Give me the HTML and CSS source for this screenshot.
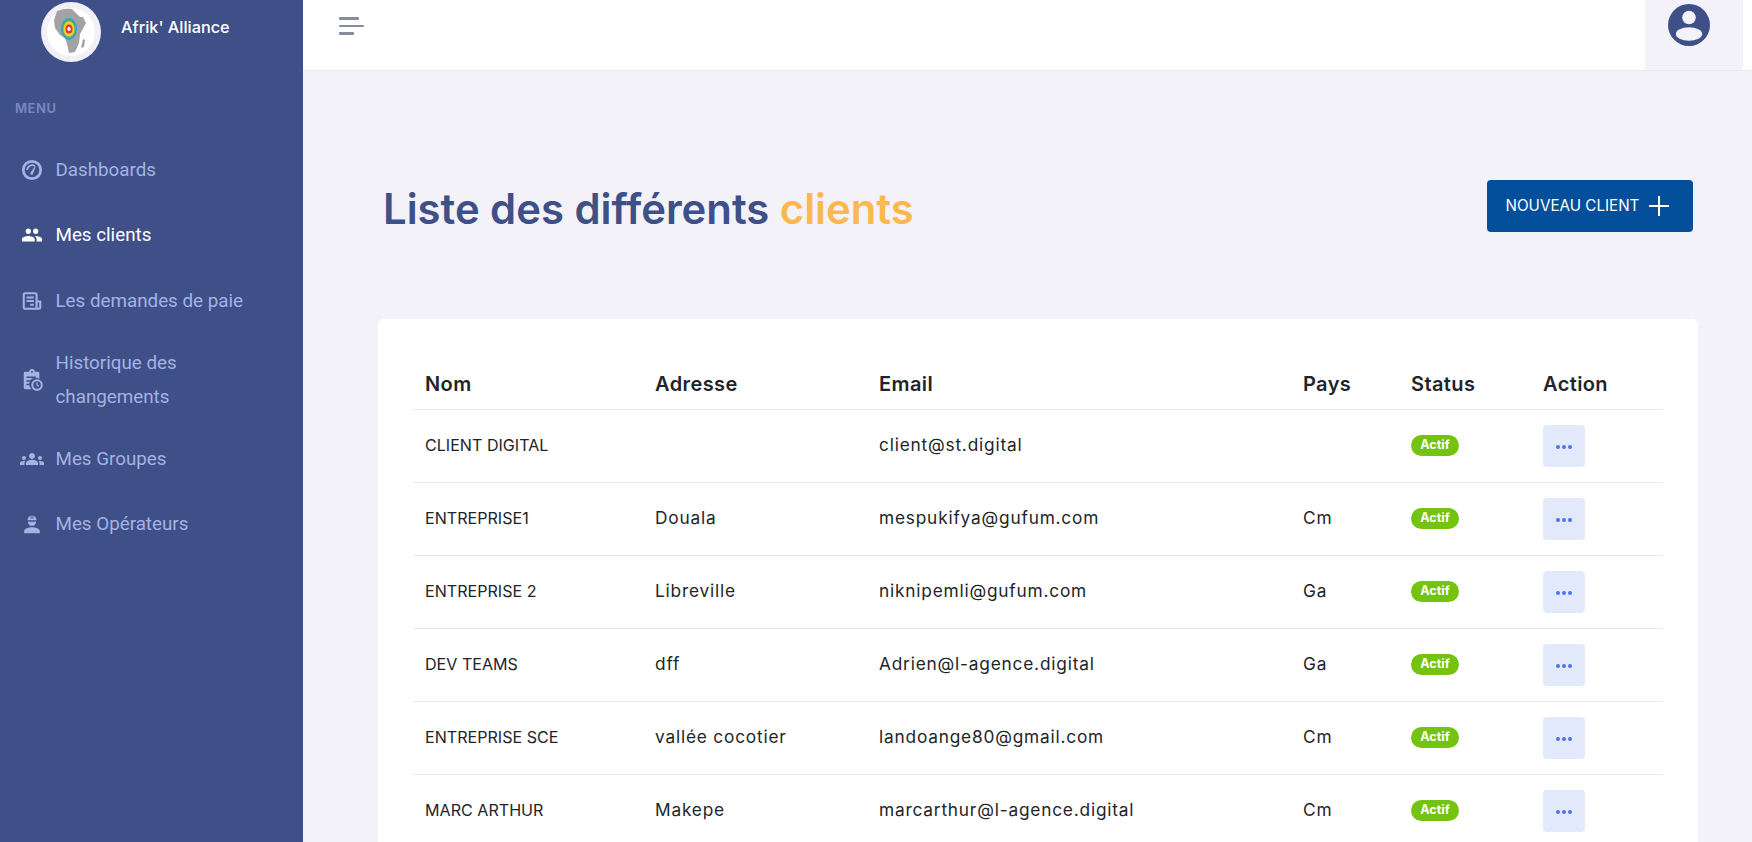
FILE: index.html
```html
<!DOCTYPE html>
<html lang="fr">
<head>
<meta charset="utf-8">
<title>Afrik' Alliance</title>
<link rel="stylesheet" href="styles.css">
</head>
<body>
<div class="app">
  <aside class="sidebar">
    <div class="brand">
      <div class="logo">
        <svg viewBox="0 0 60 60" width="60" height="60">
          <circle cx="30" cy="30" r="30" fill="#f1f0f7"/>
          <circle cx="30" cy="30" r="24" fill="#fff"/>
          <path d="M16 9Q24 6 31 7L36 12 39 15 42 15 45 21 39 32 38 41 34 50 28 51 26 42 24 36 19 33 14 26 13 18z" fill="#a3a3a6"/>
          <path d="M42 37l2 1-1 7-3 1z" fill="#a3a3a6"/>
          <ellipse cx="28" cy="27" rx="8" ry="11" fill="#2f9fdc"/>
          <ellipse cx="28" cy="27" rx="6.700" ry="9.300" fill="#5cb85c"/>
          <ellipse cx="28" cy="27" rx="5.500" ry="7.600" fill="#f3cf28"/>
          <ellipse cx="28" cy="27" rx="3.500" ry="4.500" fill="#e2363a"/>
          <ellipse cx="28" cy="27" rx="1.700" ry="2" fill="#fff"/>
        </svg>
      </div>
      <span class="brand-name">Afrik' Alliance</span>
    </div>
    <div class="menu-title">MENU</div>
    <nav class="nav">
      <a class="nav-item">
        <svg class="nav-icon" viewBox="0 0 24 24"><circle cx="12" cy="12" r="9.500" fill="none" stroke="currentColor" stroke-width="3"/><path d="M6.800 12a5.300 5.300 0 0 1 8.300-4.300" fill="none" stroke="currentColor" stroke-width="2"/><path d="M10.200 15.200l5-7.200 .9.500-3.300 8a1.500 1.500 0 0 1-2.600-1.300z" fill="currentColor"/></svg>
        <span>Dashboards</span>
      </a>
      <a class="nav-item active">
        <svg class="nav-icon" viewBox="0 0 24 24"><path fill="currentColor" d="M16 11c1.660 0 2.990-1.340 2.990-3S17.660 5 16 5c-1.660 0-3 1.340-3 3s1.340 3 3 3zm-8 0c1.660 0 2.990-1.340 2.990-3S9.660 5 8 5C6.340 5 5 6.340 5 8s1.340 3 3 3zm0 2c-2.330 0-7 1.170-7 3.500V19h14v-2.500c0-2.330-4.670-3.500-7-3.500zm8 0c-.290 0-.620.020-.970.050 1.160.840 1.970 1.970 1.970 3.450V19h6v-2.500c0-2.330-4.670-3.500-7-3.500z"/></svg>
        <span>Mes clients</span>
      </a>
      <a class="nav-item">
        <svg class="nav-icon" viewBox="0 0 24 24"><path fill="none" stroke="currentColor" stroke-width="2.300" d="M17 20.500H4.500A1.500 1.500 0 0 1 3 19V5A1.500 1.500 0 0 1 4.500 3.500h11A1.500 1.500 0 0 1 17 5v15.500zm0-8h4V19a1.500 1.500 0 0 1-1.500 1.500H17"/><path fill="currentColor" d="M6 7h8v2.200H6zM6 11h8v2.200H6zM10 15h4v2.200h-4z"/></svg>
        <span>Les demandes de paie</span>
      </a>
      <a class="nav-item multi">
        <svg class="nav-icon" viewBox="0 0 24 24"><path fill="currentColor" d="M9 3a3 3 0 0 1 6 0h3.500A1.500 1.500 0 0 1 20 4.500V11a6.500 6.500 0 0 0-8.500 11H4.500A1.500 1.500 0 0 1 3 20.500V4.500A1.500 1.500 0 0 1 4.500 3z"/><path stroke="#3f4f87" stroke-width="1.600" d="M6 9h10M6 13h5M6 17h3"/><circle cx="12" cy="3.200" r="1" fill="#3f4f87"/><circle cx="17.500" cy="17.500" r="5.200" fill="none" stroke="currentColor" stroke-width="2.200"/><path d="M17.500 14.800v2.700l1.800 1.200" fill="none" stroke="currentColor" stroke-width="1.500"/></svg>
        <span>Historique des<br>changements</span>
      </a>
      <a class="nav-item">
        <svg class="nav-icon wide" viewBox="0 0 24 24"><path fill="currentColor" d="M12 12.750c1.630 0 3.070.390 4.240.900 1.080.480 1.760 1.560 1.760 2.730V18H6v-1.610c0-1.180.680-2.260 1.760-2.730 1.170-.520 2.610-.910 4.240-.910zM4 13c1.100 0 2-.900 2-2s-.900-2-2-2-2 .900-2 2 .900 2 2 2zm1.130 1.100C4.760 14.040 4.390 14 4 14c-.990 0-1.930.210-2.780.580C.480 14.900 0 15.620 0 16.430V18h4.500v-1.610c0-.830.230-1.610.630-2.290zM20 13c1.100 0 2-.900 2-2s-.900-2-2-2-2 .900-2 2 .900 2 2 2zm4 3.430c0-.810-.480-1.530-1.220-1.850-.850-.370-1.790-.580-2.780-.580-.390 0-.760.040-1.130.100.400.680.630 1.460.630 2.290V18H24v-1.570zM12 6c1.660 0 3 1.340 3 3s-1.340 3-3 3-3-1.340-3-3 1.340-3 3-3z"/></svg>
        <span>Mes Groupes</span>
      </a>
      <a class="nav-item">
        <svg class="nav-icon" viewBox="0 0 24 24"><path fill="currentColor" d="M3.500 22v-2.500c0-2.500 5-4 8.500-4s8.500 1.500 8.500 4V22zM7.500 9.500h9a4.500 4.500 0 0 1-9 0zM6.500 8V7h.8a4.700 4.700 0 0 1 3.200-4.200V6h1V2.600h1V6h1V2.800A4.700 4.700 0 0 1 16.700 7h.8v1z"/></svg>
        <span>Mes Opérateurs</span>
      </a>
    </nav>
  </aside>
  <div class="main">
    <header class="topbar">
      <button class="burger" aria-label="Menu"><i class="b1"></i><i class="b2"></i><i class="b3"></i></button>
      <div class="user">
        <svg viewBox="0 0 42 42" width="42" height="42"><circle cx="21" cy="21" r="21" fill="#3f4f87"/><circle cx="21" cy="13.500" r="6.800" fill="#f3f2f8"/><ellipse cx="21" cy="30" rx="13.200" ry="6.800" fill="#f3f2f8"/></svg>
      </div>
    </header>
    <main class="content">
      <div class="page-head">
        <h1 class="title">Liste des différents <em>clients</em></h1>
        <button class="new-btn"><span>NOUVEAU CLIENT</span>
          <svg viewBox="0 0 20 20" width="20" height="20"><path d="M10 0v20M0 10h20" stroke="#fff" stroke-width="2"/></svg>
        </button>
      </div>
      <section class="card">
        <table class="table">
          <colgroup>
            <col class="c1"><col class="c2"><col class="c3"><col class="c4"><col class="c5"><col class="c6">
          </colgroup>
          <thead>
            <tr><th>Nom</th><th>Adresse</th><th>Email</th><th>Pays</th><th>Status</th><th>Action</th></tr>
          </thead>
          <tbody>
            <tr><td>CLIENT DIGITAL</td><td></td><td>client@st.digital</td><td></td><td><span class="badge">Actif</span></td><td><button class="more"><i></i><i></i><i></i></button></td></tr>
            <tr><td>ENTREPRISE1</td><td>Douala</td><td>mespukifya@gufum.com</td><td>Cm</td><td><span class="badge">Actif</span></td><td><button class="more"><i></i><i></i><i></i></button></td></tr>
            <tr><td>ENTREPRISE 2</td><td>Libreville</td><td>niknipemli@gufum.com</td><td>Ga</td><td><span class="badge">Actif</span></td><td><button class="more"><i></i><i></i><i></i></button></td></tr>
            <tr><td>DEV TEAMS</td><td>dff</td><td>Adrien@l-agence.digital</td><td>Ga</td><td><span class="badge">Actif</span></td><td><button class="more"><i></i><i></i><i></i></button></td></tr>
            <tr><td>ENTREPRISE SCE</td><td>vallée cocotier</td><td>landoange80@gmail.com</td><td>Cm</td><td><span class="badge">Actif</span></td><td><button class="more"><i></i><i></i><i></i></button></td></tr>
            <tr><td>MARC ARTHUR</td><td>Makepe</td><td>marcarthur@l-agence.digital</td><td>Cm</td><td><span class="badge">Actif</span></td><td><button class="more"><i></i><i></i><i></i></button></td></tr>
          </tbody>
        </table>
      </section>
    </main>
  </div>
</div>
</body>
</html>
```

FILE: styles.css
```css
* { box-sizing: border-box; }
html, body { margin: 0; height: 100%; overflow: hidden; }
body { font-family: "Inter", "Open Sans", sans-serif; background: #f3f2f8; color: #212529; }
.app { display: flex; height: 842px; overflow: hidden; }

.sidebar { width: 303px; flex: none; background: #3f4f87; color: #a5b2e2; }
.brand { display: flex; align-items: flex-start; padding: 2px 0 0 41px; height: 100px; }
.logo { width: 60px; height: 60px; flex: none; }
.logo svg { display: block; }
.brand-name { margin: 15px 0 0 20px; color: #fff; font-size: 16.300px; font-weight: 500; line-height: 20px; }
.menu-title { padding-left: 15px; font-size: 13px; font-weight: 700; letter-spacing: .5px; line-height: 16px; color: #7585bb; }
.nav { display: flex; flex-direction: column; padding-top: 21px; }
.nav-item { display: flex; align-items: center; height: 65.500px; padding-left: 21px; font-family: "Roboto", sans-serif; font-size: 18.800px; font-weight: 400; line-height: 34px; }
.nav-item.multi { height: 92.500px; }
.nav-item.active { color: #fff; }
.nav-icon { width: 22px; height: 22px; flex: none; margin-right: 12.500px; }
.nav-icon.wide { width: 24px; height: 24px; margin: 0 11.500px 0 -1px; }

.main { flex: 1; min-width: 0; display: flex; flex-direction: column; }
.topbar { height: 71px; flex: none; background: #fff; border-bottom: 1px solid #e9e8ef; display: flex; justify-content: space-between; padding-right: 9px; }
.burger { margin: 17px 0 0 36px; padding: 0; border: 0; background: none; width: 25px; height: 18px; display: flex; flex-direction: column; justify-content: space-between; }
.burger i { display: block; height: 3px; background: #868b9d; border-radius: 1px; }
.burger .b1 { width: 20px; }
.burger .b2 { width: 25px; height: 2px; }
.burger .b3 { width: 15px; }
.user { width: 98px; background: #f3f2f8; display: flex; justify-content: center; padding: 4px 10px 0 0; }
.user svg { display: block; }

.content { padding: 109px 54px 0 75px; }
.page-head { display: flex; justify-content: space-between; align-items: center; height: 52px; padding-left: 5px; margin-right: 5px; }
.title { margin: 6px 0 0; font-size: 41.800px; font-weight: 600; line-height: 52px; color: #3f4f87; }
.title em { font-style: normal; color: #fbb84e; }
.new-btn { width: 206px; height: 52px; border: 0; border-radius: 4px; background: #034f9c; color: #fff; font-family: inherit; font-size: 15.200px; font-weight: 400; display: flex; align-items: center; justify-content: center; gap: 10px; padding: 0 5px 0 0; }
.new-btn span { margin-bottom: 2px; }

.card { margin-top: 87px; background: #fff; border-radius: 6px; padding: 35px 35px 0; height: 600px; }
.table { width: 1250px; border-collapse: collapse; table-layout: fixed; font-size: 17.300px; letter-spacing: .8px; color: #212529; }
.c1 { width: 230px; } .c2 { width: 224px; } .c3 { width: 424px; } .c4 { width: 108px; } .c5 { width: 132px; } .c6 { width: 132px; }
.table th { height: 55px; padding: 6px 12px 0; text-align: left; font-size: 20px; letter-spacing: .4px; font-weight: 600; border-bottom: 1px solid #e9e9ec; }
.table td { height: 73px; padding: 0 12px; border-bottom: 1px solid #e9e9ec; }
.table td:first-child { font-size: 16.100px; letter-spacing: 0; padding-bottom: 2px; }
.table td:nth-child(2), .table td:nth-child(3), .table td:nth-child(4) { padding-bottom: 2px; }
.badge { display: block; width: 48px; height: 21px; border-radius: 11px; background: #74c310; color: #fff; font-size: 12.500px; letter-spacing: 0; font-weight: 700; line-height: 20px; text-align: center; }
.more { width: 42px; height: 42px; border: 0; border-radius: 4px; background: #e1e9fb; padding: 2px 0 0; display: flex; align-items: center; justify-content: center; gap: 2px; }
.more i { width: 4px; height: 4px; border-radius: 50%; background: #4f72f0; }
```
